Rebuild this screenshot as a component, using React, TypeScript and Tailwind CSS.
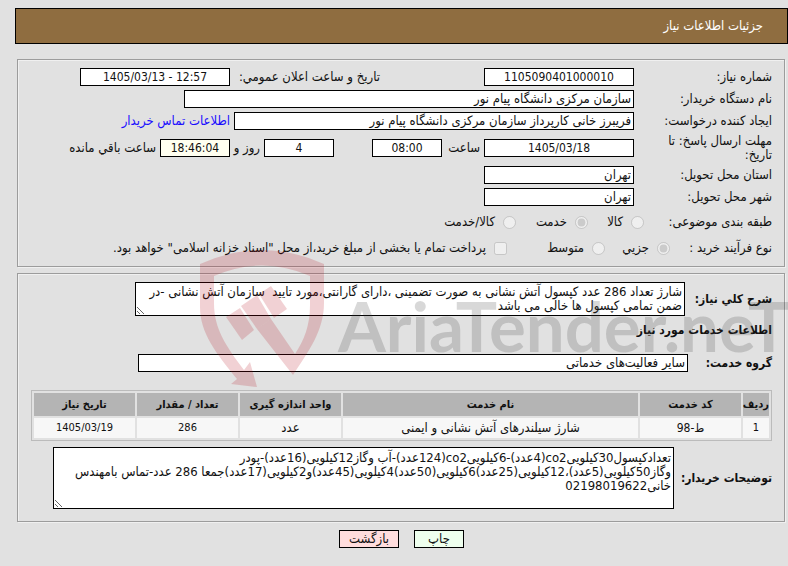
import type { ComponentProps, ReactNode } from 'react';
import clsx from 'clsx';

const panel =
    'border border-[#9c9c9c] shadow-[1px_1px_0_#f0f0f0,inset_1px_1px_0_#f0f0f0]';

function Field({ numeric, className, ...props }: ComponentProps<'input'> & { numeric?: boolean }) {
    return (
        <input
            readOnly
            dir={numeric ? 'ltr' : 'rtl'}
            className={clsx(
                'h-[18px] min-w-0 border border-black px-[2px]',
                numeric ? 'text-center text-[12px] leading-4' : 'pb-[2px] text-[13px] leading-[14px]',
                className
            )}
            {...props}
        />
    );
}

function Row({ id, label, children, className }: { id: string; label: string; children: ReactNode; className?: string }) {
    return (
        <div className={clsx('flex items-center', className)}>
            <label htmlFor={id} className="w-[138px] shrink-0 pl-5 leading-[14px]">{label}</label>
            {children}
        </div>
    );
}

function Choice({ label, className, ...props }: ComponentProps<'input'> & { label: string }) {
    return (
        <label className={clsx('flex items-center gap-2 whitespace-nowrap', className)}>
            <input disabled className="h-[13px] w-[13px]" {...props} />
            {label}
        </label>
    );
}

const columns = [
    { title: 'ردیف', value: '1', width: 'w-[26px]', size: 'text-[11px]' },
    { title: 'کد خدمت', value: 'ط-98', width: 'w-[101px]', size: 'text-[12px]' },
    { title: 'نام خدمت', value: 'شارژ سیلندرهای آتش نشانی و ایمنی', width: '', size: 'text-[13px]' },
    { title: 'واحد اندازه گیری', value: 'عدد', width: 'w-[101px]', size: 'text-[13px]' },
    { title: 'تعداد / مقدار', value: '286', width: 'w-[101px]', size: 'text-[11px]' },
    { title: 'تاریخ نیاز', value: '1405/03/19', width: 'w-[101px]', size: 'text-[11px]' },
];

const description = `شارژ تعداد 286 عدد کپسول آتش نشانی به صورت تضمینی ،دارای گارانتی،مورد تایید  سازمان آتش نشانی -در
ضمن تمامی کپسول ها خالی می باشد`;

const notes = `تعدادکپسول30کیلوییco2(4عدد)-6کیلوییco2(124عدد)-آب وگاز12کیلویی(16عدد)-پودر
وگاز50کیلویی(5عدد)،12کیلویی(25عدد)6کیلویی(50عدد)4کیلویی(45عدد)و2کیلویی(17عدد)جمعا 286 عدد-تماس بامهندس
خانی02198019622`;

function Watermark() {
    return (
        <svg
            className="pointer-events-none absolute left-[200px] top-[250px]"
            width="588"
            height="140"
            viewBox="200 250 588 140"
            direction="ltr"
            aria-hidden="true"
        >
            <g fill="#b00010" fillOpacity="0.18">
                <path
                    fillRule="evenodd"
                    d="M200 264Q262 236 324 264V303C324 331 308 352 293 375L257 329L271 319L295 354C304 340 310 326 310 305V276Q262 255 214 276V303C214 329 226 346 244 370L250 362L257 387L231 384L237 379C216 353 200 333 200 307Z"
                />
                <path d="M226 317L240 308L254 330L242 340Z" />
                <path d="M241 306L257 295L271 319L257 329Z" />
                <path d="M259 294L271 286L287 309L274 318Z" />
            </g>
            <g
                fill="#3c3c3c"
                fillOpacity="0.2"
                fontSize="69"
                fontWeight="700"
                fontFamily="Lato, sans-serif"
            >
                <text x="338" y="352">AriaTender.neT</text>
            </g>
        </svg>
    );
}

export default function App() {
    return (
        <div
            dir="rtl"
            lang="fa"
            className={`relative min-h-screen overflow-hidden bg-[#e1e1e1] pb-4 pl-[15px] pt-2 font-["DejaVu_Sans_Condensed","DejaVu_Sans",sans-serif] text-[13px] leading-[14px] text-[#111]`}
        >
            <header className="flex h-9 items-center border border-black bg-[#8f6d40] px-6 text-white">
                <h1>جزئیات اطلاعات نیاز</h1>
            </header>

            <main className="ml-[2px] mr-[3px] mt-[15px]">
                <section className={clsx(panel, 'flex flex-col gap-1 pb-2 pr-3 pt-2')}>
                    <Row id="number" label="شماره نیاز:">
                        <Field id="number" numeric className="w-[150px] bg-white" value="1105090401000010" />
                        <label htmlFor="announced" className="mr-[104px] w-[150px] whitespace-nowrap">تاریخ و ساعت اعلان عمومي:</label>
                        <Field id="announced" numeric className="w-[150px] bg-white" value="1405/03/13 - 12:57" />
                    </Row>
                    <Row id="buyer" label="نام دستگاه خریدار:">
                        <Field id="buyer" className="w-[450px] bg-white" value="سازمان مرکزی دانشگاه پیام نور" />
                    </Row>
                    <Row id="creator" label="ایجاد کننده درخواست:">
                        <Field id="creator" className="w-[400px] bg-white" value="فریبرز خانی کارپرداز سازمان مرکزی دانشگاه پیام نور" />
                        <a href="#contact" className="mr-1 whitespace-nowrap text-[#1a0dff]">اطلاعات تماس خریدار</a>
                    </Row>
                    <Row id="deadline" label="مهلت ارسال پاسخ: تا تاریخ:" className="h-7">
                        <Field id="deadline" numeric className="w-[150px] bg-white" value="1405/03/18" />
                        <label htmlFor="hour" className="w-[42px] pr-1">ساعت</label>
                        <Field id="hour" numeric className="w-[70px] bg-white" value="08:00" />
                        <Field id="days" numeric className="mr-[38px] w-[70px] bg-white" value="4" />
                        <label htmlFor="days" className="w-[34px] whitespace-nowrap pr-1">روز و</label>
                        <Field id="remaining" numeric className="w-[70px] bg-[#fffff0]" value="18:46:04" />
                        <label htmlFor="remaining" className="whitespace-nowrap pr-1">ساعت باقي مانده</label>
                    </Row>
                    <Row id="province" label="استان محل تحویل:">
                        <Field id="province" className="w-[150px] bg-white" value="تهران" />
                    </Row>
                    <Row id="city" label="شهر محل تحویل:">
                        <Field id="city" className="w-[150px] bg-white" value="تهران" />
                    </Row>
                    <div role="radiogroup" aria-labelledby="category" className="flex h-6 items-center">
                        <span id="category" className="w-32 shrink-0">طبقه بندی موضوعی:</span>
                        <Choice type="radio" name="category" label="کالا" className="w-14" />
                        <Choice type="radio" name="category" label="خدمت" className="w-[72px]" defaultChecked />
                        <Choice type="radio" name="category" label="کالا/خدمت" />
                    </div>
                    <div role="radiogroup" aria-labelledby="process" className="flex h-5 items-center">
                        <span id="process" className="w-[102px] shrink-0">نوع فرآیند خرید :</span>
                        <Choice type="radio" name="process" label="جزیي" className="w-[65px]" defaultChecked />
                        <Choice type="radio" name="process" label="متوسط" className="w-[98px]" />
                        <Choice type="checkbox" label={'پرداخت تمام یا بخشی از مبلغ خرید،از محل "اسناد خزانه اسلامی" خواهد بود.'} />
                    </div>
                </section>

                <section className={clsx(panel, 'mt-[6px] pb-3 pr-3 pt-2')}>
                    <div className="flex items-center">
                        <label htmlFor="description" className="w-[87px] shrink-0 text-[12px] font-bold">شرح کلي نیاز:</label>
                        <textarea
                            id="description"
                            readOnly
                            className="h-[34px] w-[550px] overflow-hidden whitespace-pre border border-black bg-white px-[2px] py-[2px] leading-[14px]"
                            defaultValue={description}
                        />
                    </div>
                    <h2 className="mt-[6px] text-[12px] font-bold leading-4">اطلاعات خدمات مورد نیاز</h2>
                    <div className="mt-4 flex items-center">
                        <label htmlFor="group" className="w-[84px] shrink-0 text-[12px] font-bold">گروه خدمت:</label>
                        <Field id="group" className="w-[550px] bg-white" value="سایر فعالیت‌های خدماتی" />
                    </div>
                    <div className="ml-[13px] mt-[18px]">
                        <table className="w-full table-fixed border-separate border-spacing-[2px] border border-[#bbb] text-center">
                            <thead>
                                <tr>
                                    {columns.map((c) => (
                                        <th key={c.title} className={clsx('h-[23px] whitespace-nowrap bg-[#b4b4b4] text-[11px] font-bold', c.width)}>{c.title}</th>
                                    ))}
                                </tr>
                            </thead>
                            <tbody>
                                <tr>
                                    {columns.map((c) => (
                                        <td key={c.title} className={clsx('h-5 bg-[#f7f7f7]', c.size)}>{c.value}</td>
                                    ))}
                                </tr>
                            </tbody>
                        </table>
                    </div>
                    <div className="mt-[6px] flex items-center">
                        <label htmlFor="notes" className="w-[98px] shrink-0 text-[12px] font-bold">توضیحات خریدار:</label>
                        <textarea
                            id="notes"
                            readOnly
                            className="h-[62px] w-[621px] overflow-hidden whitespace-pre border border-black bg-white px-[2px] py-[3px] leading-[14px]"
                            defaultValue={notes}
                        />
                    </div>
                </section>
            </main>

            <div className="mt-2 flex justify-center gap-[15px]">
                <button type="button" className="h-[18px] w-[50px] border border-black bg-[#eeffee] leading-4">چاپ</button>
                <button type="button" className="h-[18px] w-[60px] border border-black bg-[#ffdddd] leading-4">بازگشت</button>
            </div>

            <Watermark />
        </div>
    );
}
